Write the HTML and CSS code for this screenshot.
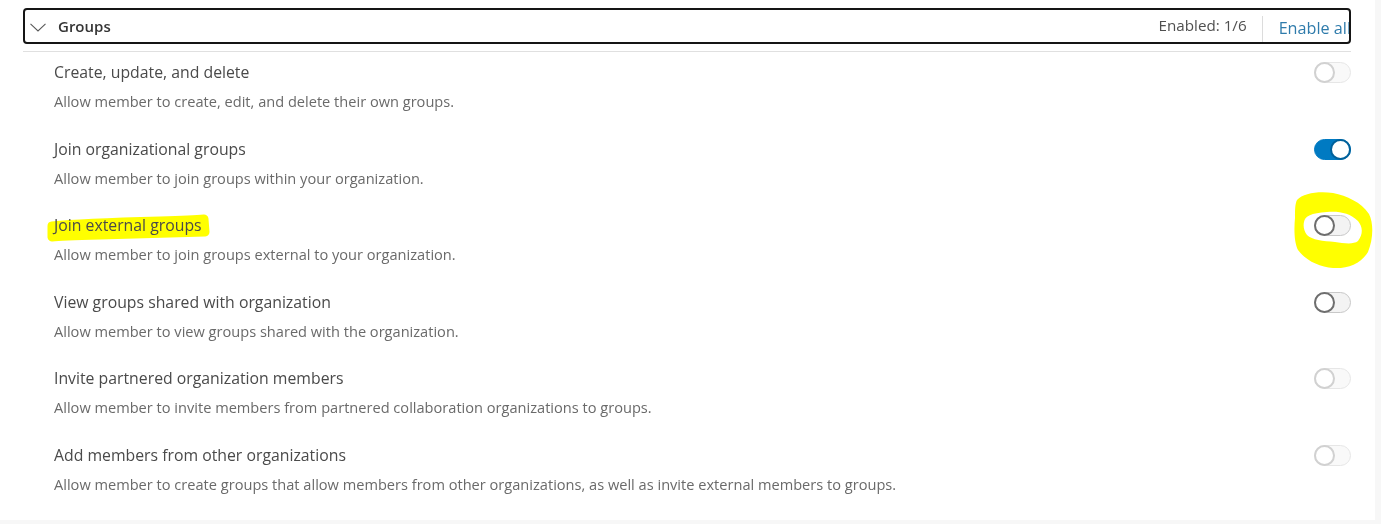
FILE: index.html
```
<!DOCTYPE html>
<html>
<head>
<meta charset="utf-8">
<link rel="stylesheet" href="styles.css">
</head>
<body>
<div class="panel">
  <div class="header">
    <svg class="chev" width="16" height="9" viewBox="0 0 16 9"><path d="M0.5 0.8 L8 8 L15.5 0.8" fill="none" stroke="#5a5a5a" stroke-width="1.1"/></svg>
    <span class="title">Groups</span>
    <span class="count">Enabled: 1/6</span>
    <span class="divider"></span>
    <span class="enable">Enable all</span>
  </div>
  <div class="sep"></div>
  <div class="list">
    <div class="row">
      <div class="text">
        <div class="name">Create, update, and delete</div>
        <div class="desc">Allow member to create, edit, and delete their own groups.</div>
      </div>
      <span class="toggle disabled"></span>
    </div>
    <div class="row">
      <div class="text">
        <div class="name">Join organizational groups</div>
        <div class="desc">Allow member to join groups within your organization.</div>
      </div>
      <span class="toggle on"></span>
    </div>
    <div class="row">
      <div class="text">
        <div class="name">Join external groups</div>
        <div class="desc">Allow member to join groups external to your organization.</div>
      </div>
      <span class="toggle"></span>
    </div>
    <div class="row">
      <div class="text">
        <div class="name">View groups shared with organization</div>
        <div class="desc">Allow member to view groups shared with the organization.</div>
      </div>
      <span class="toggle"></span>
    </div>
    <div class="row">
      <div class="text">
        <div class="name">Invite partnered organization members</div>
        <div class="desc">Allow member to invite members from partnered collaboration organizations to groups.</div>
      </div>
      <span class="toggle disabled"></span>
    </div>
    <div class="row">
      <div class="text">
        <div class="name">Add members from other organizations</div>
        <div class="desc">Allow member to create groups that allow members from other organizations, as well as invite external members to groups.</div>
      </div>
      <span class="toggle disabled"></span>
    </div>
  </div>
  <svg class="mark mark-text" width="180" height="40" viewBox="0 0 180 40">
    <path d="M12 18 C40 15 80 14 120 13 C140 12.5 155 12 164 11 L165 24 C140 25 100 26 60 27 C40 27.5 20 28 12 29 Z" fill="#ffff00" stroke="#ffff00" stroke-width="9" stroke-linejoin="round"/>
  </svg>
  <svg class="mark mark-ring" width="90" height="86" viewBox="0 0 90 86">
    <path fill="#ffff00" fill-rule="evenodd" d="M10 12 C16 5 32 3 46 5 C60 8 74 14 82 26 C87 36 86 52 81 64 C74 76 60 81 46 80 C32 79 18 72 11 62 C7 54 7 40 8 30 C8 22 8 16 10 12 Z M17 34 C18 28 24 25 40 24 C52 23 63 25 71 33 C75 38 77 45 71 53 C66 57 56 55 48 54 C36 53 25 52 20 47 C17 43 16 38 17 34 Z"/>
  </svg>
</div>
</body>
</html>
```
FILE: styles.css
```
html, body {
  margin: 0;
  padding: 0;
}
body {
  background: #f7f7f7;
  font-family: "Open Sans", Lato, sans-serif;
  color: #4a4a4a;
}
.panel {
  position: relative;
  width: 1375px;
  height: 520px;
  background: #ffffff;
  box-sizing: border-box;
  padding: 8px 24px 0 23px;
}
.header {
  height: 36px;
  box-sizing: border-box;
  border: 2px solid #151515;
  border-radius: 4px;
  display: flex;
  align-items: center;
  overflow: hidden;
  white-space: nowrap;
}
.chev {
  margin-left: 5px;
  margin-top: 3px;
  flex: none;
}
.title {
  margin-left: 12px;
  font-size: 15px;
  font-weight: 600;
  color: #353535;
  flex: 1;
}
.count {
  font-size: 15.2px;
  color: #4f4f4f;
  margin-top: -3px;
}
.divider {
  width: 1px;
  align-self: stretch;
  margin: 6px 0 0 15px;
  background: #dcdcdc;
}
.enable {
  margin-left: 16px;
  font-size: 16.2px;
  color: #2f7bab;
  margin-top: 4px;
  margin-right: -2px;
}
.sep {
  height: 1px;
  background: #e0e0e0;
  margin-top: 7px;
}
.list {
  padding-top: 10px;
}
.row {
  display: flex;
  align-items: flex-start;
  padding-left: 31px;
  padding-bottom: 27.6px;
}
.text {
  flex: 1;
  position: relative;
  z-index: 1;
}
.name {
  font-size: 15.8px;
  line-height: 20px;
  color: #4a4a4a;
}
.desc {
  font-size: 14.6px;
  line-height: 20px;
  margin-top: 9px;
  color: #6a6a6a;
}
.toggle {
  position: relative;
  flex: none;
  width: 37px;
  height: 21px;
  box-sizing: border-box;
  border: 1px solid #c8c8c8;
  border-radius: 11px;
  background: #f3f3f3;
  margin-top: 0;
  z-index: 1;
}
.toggle::after {
  content: "";
  position: absolute;
  left: -1px;
  top: -1px;
  width: 21px;
  height: 21px;
  box-sizing: border-box;
  border-radius: 50%;
  border: 2px solid #6e6e6e;
  background: #ffffff;
}
.toggle.disabled {
  opacity: 0.45;
}
.toggle.disabled::after {
  border-color: #9a9a9a;
}
.toggle.on {
  background: #007ac2;
  border-color: #007ac2;
}
.toggle.on::after {
  left: auto;
  right: -1px;
  border-color: #00619b;
}
.mark {
  position: absolute;
  mix-blend-mode: multiply;
}
.mark-text {
  left: 40px;
  top: 208px;
}
.mark-ring {
  left: 1287px;
  top: 188px;
}
```
